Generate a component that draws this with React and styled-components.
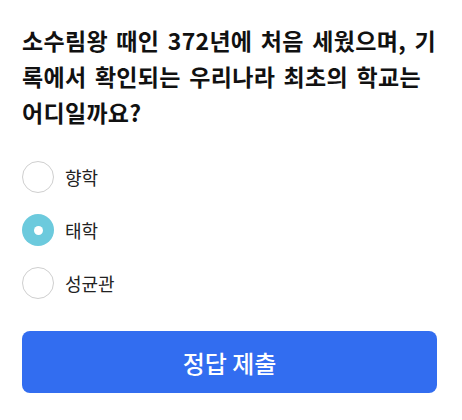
import React, { useState } from "react"
import styled, { createGlobalStyle } from "styled-components"

const GlobalStyle = createGlobalStyle`
    body{
        margin: 0;
        background: #ffffff;
        font-family: "Noto Sans CJK KR", "Noto Sans", sans-serif;
    }
`

const Page = styled.main`
    padding: 22px 20px 0 22px;
`

const Question = styled.h1`
    margin: 0 0 31px;
    font-size: 23px;
    font-weight: 700;
    line-height: 36px;
    color: #111111;
    letter-spacing: 0.3px;
    word-spacing: 3px;
`

const Options = styled.div`
    display: flex;
    flex-direction: column;
    gap: 21px;
    margin-bottom: 32px;
`

const Option = styled.label`
    display: flex;
    align-items: center;
    gap: 11px;
    cursor: pointer;
    font-size: 18px;
    color: #222222;
`

const Radio = styled.span`
    box-sizing: border-box;
    width: 32px;
    height: 32px;
    border-radius: 50%;
    display: flex;
    align-items: center;
    justify-content: center;
    border: ${p => p.checked ? "none" : "1.5px solid #cfcfcf"};
    background: ${p => p.checked ? "#6ccadd" : "#ffffff"};
    &::after{
        content: "";
        width: 9px;
        height: 9px;
        border-radius: 50%;
        background: #ffffff;
        display: ${p => p.checked ? "block" : "none"};
    }
`

const SubmitButton = styled.button`
    display: block;
    width: calc(100% - 5px);
    height: 62px;
    border: none;
    border-radius: 8px;
    background: #326df0;
    color: #ffffff;
    font-family: inherit;
    font-size: 24px;
    font-weight: 500;
    cursor: pointer;
`

const choices = ["향학", "태학", "성균관"]

const App = () => {
    const [selected, setSelected] = useState(1)

    return (
        <Page>
            <GlobalStyle/>
            <Question>소수림왕 때인 372년에 처음 세웠으며, 기록에서 확인되는 우리나라 최초의 학교는 어디일까요?</Question>
            <Options>
                {choices.map((choice, i) =>
                    <Option key={choice} onClick={() => setSelected(i)}>
                        <Radio checked={selected === i}/>
                        {choice}
                    </Option>
                )}
            </Options>
            <SubmitButton>정답 제출</SubmitButton>
        </Page>
    )
}

export default App
